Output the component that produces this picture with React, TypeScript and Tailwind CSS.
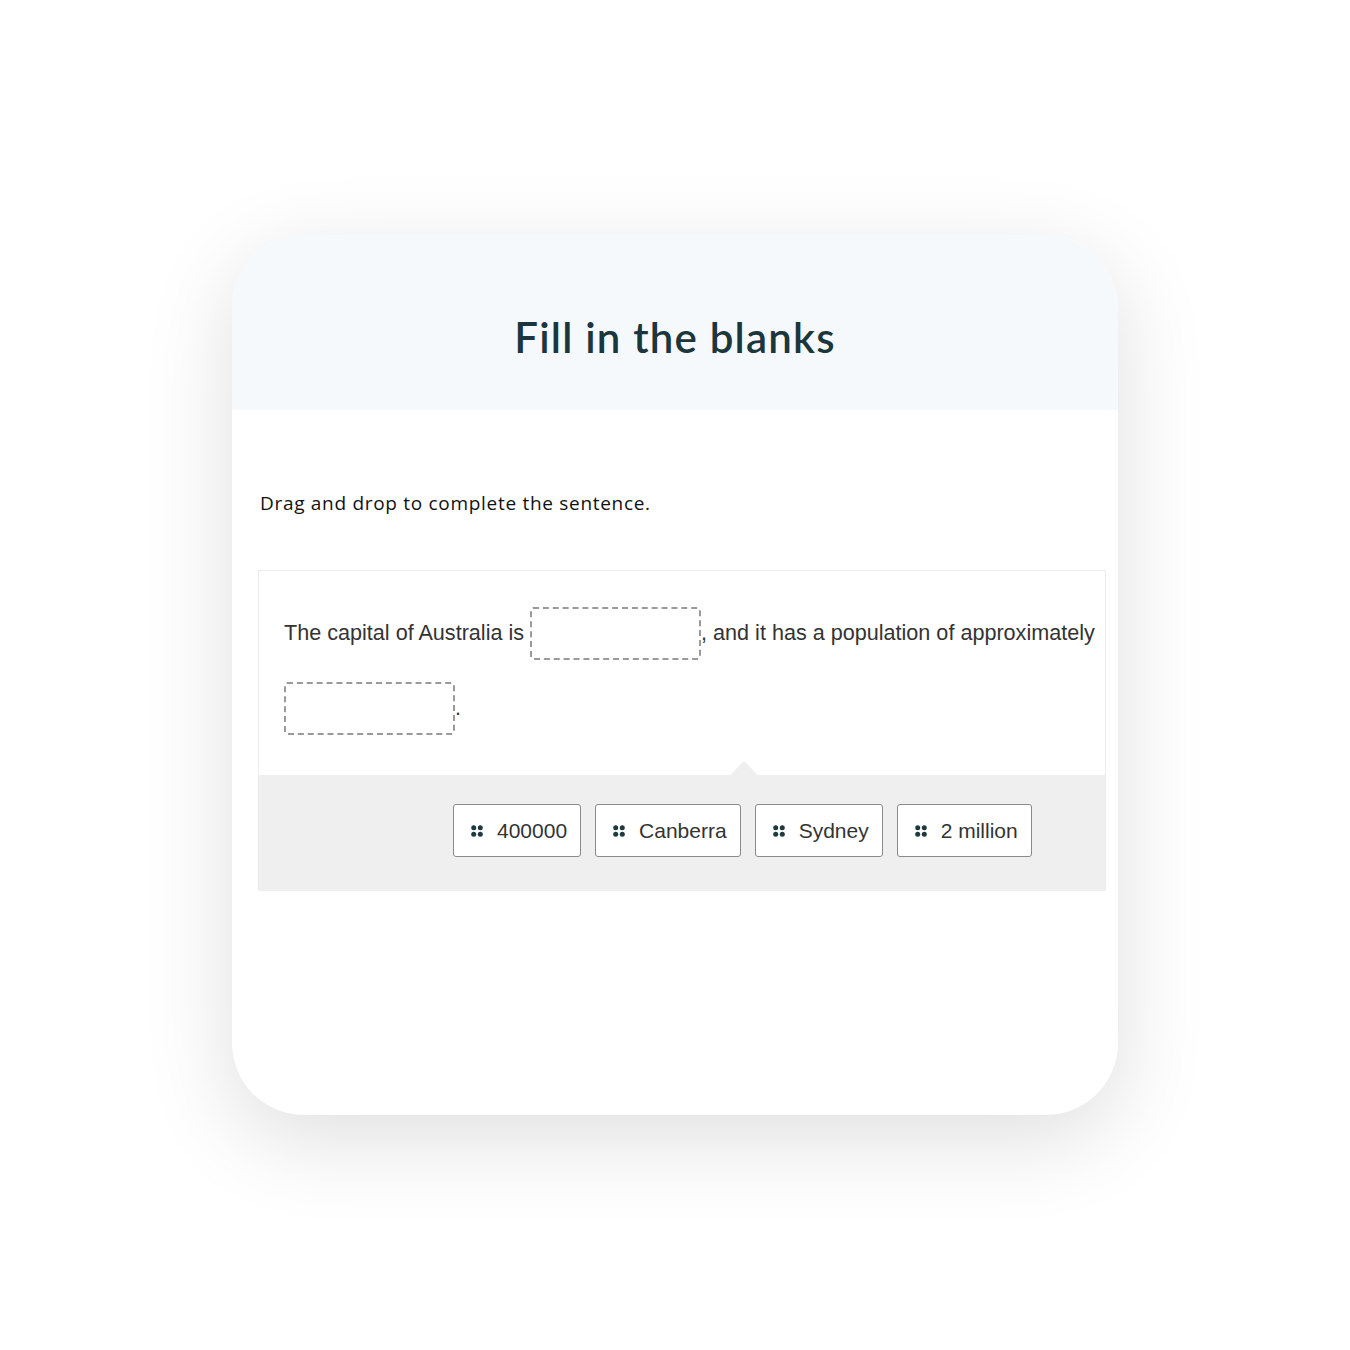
import React from 'react';

const words = ['400000', 'Canberra', 'Sydney', '2 million'];

function Grip() {
  return (
    <svg width="12" height="12" viewBox="0 0 12 12" className="shrink-0">
      <circle cx="2.7" cy="2.7" r="2.5" fill="#1f3a3f" />
      <circle cx="9.3" cy="2.7" r="2.5" fill="#1f3a3f" />
      <circle cx="2.7" cy="9.3" r="2.5" fill="#1f3a3f" />
      <circle cx="9.3" cy="9.3" r="2.5" fill="#1f3a3f" />
    </svg>
  );
}

function Blank() {
  return <span className="inline-block w-[171px] h-[53px] rounded-[3px] border-2 border-dashed border-[#9a9a9a] shrink-0" />;
}

export default function App() {
  return (
    <div className="w-[1350px] h-[1350px] bg-white flex justify-center pt-[235px]">
      <div className="w-[886px] h-[880px] rounded-[72px] bg-white overflow-hidden shadow-[0_24px_90px_rgba(0,0,0,0.13)]">
        <div className="h-[175px] bg-[#f5f9fb] flex items-center justify-center pt-[30px]">
          <h1 className="text-[42px] font-semibold text-[#1b363c] font-['Lato',sans-serif] tracking-[1.2px]">
            Fill in the blanks
          </h1>
        </div>

        <div className="pl-[26px] pr-[12px]">
          <p className="mt-[81px] ml-[2px] text-[19px] text-[#111] font-['Open_Sans',sans-serif] tracking-[0.7px] leading-[24px]">
            Drag and drop to complete the sentence.
          </p>

          <div className="mt-[55px] border border-b-0 border-[#ececec] font-['Liberation_Sans',Arial,sans-serif] text-[21.6px] text-[#333]">
            <div className="flex flex-wrap items-center gap-y-[22px] pl-[25px] pt-[36px] pb-[40px]">
              <span className="whitespace-nowrap mr-[6px]">The capital of Australia is</span>
              <Blank />
              <span className="whitespace-nowrap">, and it has a population of approximately</span>
              <Blank />
              <span>.</span>
            </div>

            <div className="relative bg-[#efefef] h-[116px] pl-[194px] pt-[29px] flex gap-[14px] items-start">
              <span className="absolute left-[470px] top-[-14px] w-0 h-0 border-l-[15px] border-r-[15px] border-b-[15px] border-l-transparent border-r-transparent border-b-[#efefef]" />
              {words.map((w) => (
                <div
                  key={w}
                  className="h-[53px] flex items-center gap-[14px] pl-[17px] pr-[13px] bg-white border border-[#8a8a8a] rounded-[3px] text-[21px] text-[#333]"
                >
                  <Grip />
                  <span>{w}</span>
                </div>
              ))}
            </div>
          </div>
        </div>
      </div>
    </div>
  );
}
